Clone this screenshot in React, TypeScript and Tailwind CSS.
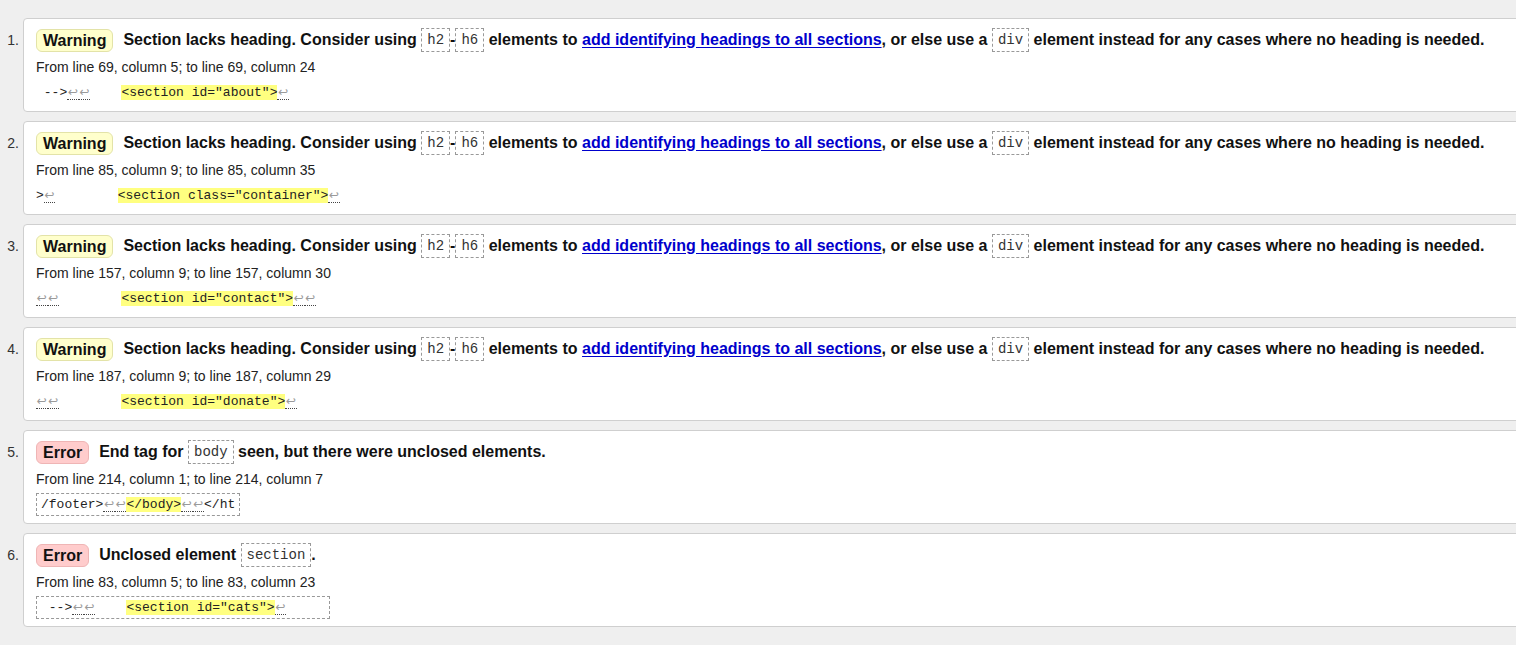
import React from "react";

const mono = "font-['Liberation_Mono',monospace]";

function Ret() {
  return (
    <span className="inline-block w-[11.5px] text-center text-[#9a9a9a] text-[12px] leading-[14px] border-b border-dotted border-[#444] font-['DejaVu_Sans',sans-serif]">
      ↩
    </span>
  );
}

function Code({ children }: { children: React.ReactNode }) {
  return (
    <code className={`${mono} inline-block text-[14px] leading-[22px] font-normal text-[#333] border border-dashed border-[#999] px-[5px] align-middle`}>
      {children}
    </code>
  );
}

function Hi({ children }: { children: React.ReactNode }) {
  return <span className="bg-[#ffff80]">{children}</span>;
}

type Msg = {
  type: "Warning" | "Error";
  title: React.ReactNode;
  from: string;
  extract: React.ReactNode;
  boxed?: boolean;
};

function Badge({ type }: { type: Msg["type"] }) {
  const cls =
    type === "Warning"
      ? "bg-[#ffffcc] border-[#e3e3a8]"
      : "bg-[#ffcccc] border-[#efb5b5]";
  return (
    <span className={`inline-block rounded-[6px] border px-[6px] leading-[21px] mr-[10px] ${cls}`}>
      {type}
    </span>
  );
}

const sectionTitle = (
  <>
    Section lacks heading. Consider using <Code>h2</Code>-<Code>h6</Code> elements to{" "}
    <a href="#" className="text-[#0000cc] underline underline-offset-2">
      add identifying headings to all sections
    </a>
    , or else use a <Code>div</Code> element instead for any cases where no heading is needed.
  </>
);

const messages: Msg[] = [
  {
    type: "Warning",
    title: sectionTitle,
    from: "From line 69, column 5; to line 69, column 24",
    extract: (
      <>
        {" -->"}
        <Ret />
        <Ret />
        {"    "}
        <Hi>{'<section id="about">'}</Hi>
        <Ret />
      </>
    ),
  },
  {
    type: "Warning",
    title: sectionTitle,
    from: "From line 85, column 9; to line 85, column 35",
    extract: (
      <>
        {">"}
        <Ret />
        {"        "}
        <Hi>{'<section class="container">'}</Hi>
        <Ret />
      </>
    ),
  },
  {
    type: "Warning",
    title: sectionTitle,
    from: "From line 157, column 9; to line 157, column 30",
    extract: (
      <>
        <Ret />
        <Ret />
        {"        "}
        <Hi>{'<section id="contact">'}</Hi>
        <Ret />
        <Ret />
      </>
    ),
  },
  {
    type: "Warning",
    title: sectionTitle,
    from: "From line 187, column 9; to line 187, column 29",
    extract: (
      <>
        <Ret />
        <Ret />
        {"        "}
        <Hi>{'<section id="donate">'}</Hi>
        <Ret />
      </>
    ),
  },
  {
    type: "Error",
    title: (
      <>
        End tag for <Code>body</Code> seen, but there were unclosed elements.
      </>
    ),
    from: "From line 214, column 1; to line 214, column 7",
    boxed: true,
    extract: (
      <>
        {"/footer>"}
        <Ret />
        <Ret />
        <Hi>{"</body>"}</Hi>
        <Ret />
        <Ret />
        {"</ht"}
      </>
    ),
  },
  {
    type: "Error",
    title: (
      <>
        Unclosed element <Code>section</Code>.
      </>
    ),
    from: "From line 83, column 5; to line 83, column 23",
    boxed: true,
    extract: (
      <>
        {" -->"}
        <Ret />
        <Ret />
        {"    "}
        <Hi>{'<section id="cats">'}</Hi>
        <Ret />
        {"     "}
      </>
    ),
  },
];

export default function App() {
  return (
    <div className="min-h-screen w-full overflow-hidden bg-[#efefef] pt-[18px] font-['Liberation_Sans',Arial,sans-serif] text-[#111]">
      <ol className="flex flex-col gap-[9px]">
        {messages.map((m, i) => (
          <li key={i} className="flex">
            <div className="w-[23px] shrink-0 pr-[4px] pt-[13px] text-right text-[14px] leading-[18px] text-[#333]">
              {i + 1}.
            </div>
            <div className="mr-[-20px] flex-1 rounded-[4px] border border-[#cfcfcf] bg-white pl-[12px] pt-[9px] pb-[7px]">
              <div className="flex h-[24px] items-center whitespace-nowrap text-[16px] font-bold leading-[24px]">
                <Badge type={m.type} />
                <span>{m.title}</span>
              </div>
              <div className="mt-[6px] text-[14px] leading-[18px] text-[#222]">{m.from}</div>
              <div className="mt-[4px] flex h-[24px] items-center">
                <div
                  className={`${mono} whitespace-pre text-[13px] leading-[19px] text-[#222] ${
                    m.boxed ? "border border-dashed border-[#999] px-[4px] py-[1px]" : ""
                  }`}
                >
                  {m.extract}
                </div>
              </div>
            </div>
          </li>
        ))}
      </ol>
    </div>
  );
}
